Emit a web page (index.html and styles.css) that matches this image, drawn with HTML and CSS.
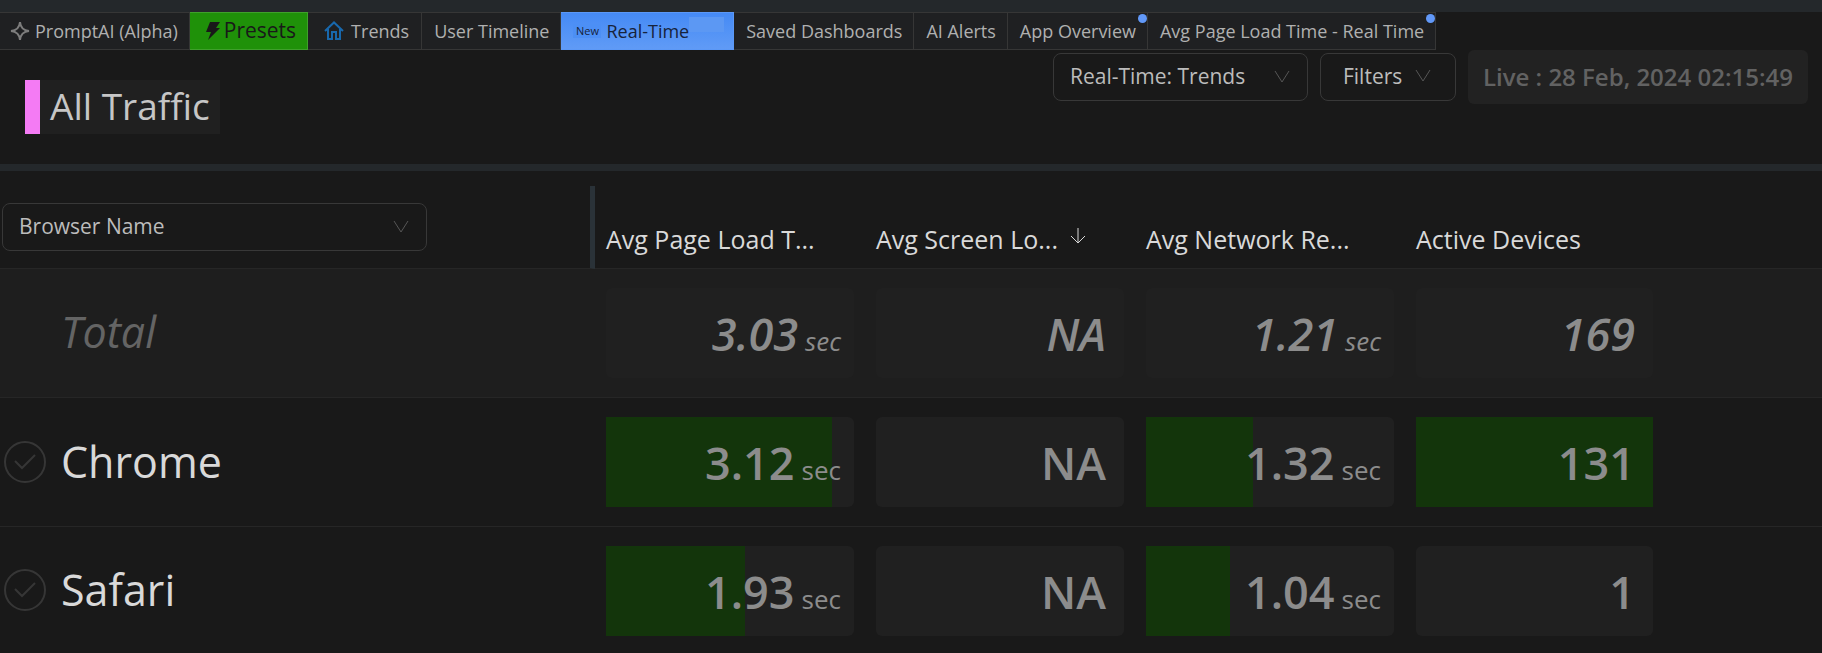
FILE: index.html
```html
<!DOCTYPE html>
<html lang="en">
<head>
    <meta charset="UTF-8">
    <title>Real-Time</title>
    <link rel="stylesheet" href="styles.css">
</head>
<body>
    <nav class="tabs">
        <a class="tab" href="#">
            <svg class="icon-spark" width="20" height="20" viewBox="0 0 20 20"><path d="M10 1 C10.500 6.500 13.500 9.500 19 10 C13.500 10.500 10.500 13.500 10 19 C9.500 13.500 6.500 10.500 1 10 C6.500 9.500 9.500 6.500 10 1 Z"/></svg>
            <span>PromptAI (Alpha)</span>
        </a>
        <a class="tab tab-presets" href="#">
            <svg class="icon-bolt" width="16" height="20" viewBox="0 0 16 20"><path d="M5 2 H15 L11 8 H15 L3 20 L6 12 H1 Z"/></svg>
            <span>Presets</span>
        </a>
        <a class="tab tab-trends" href="#">
            <svg class="icon-home" width="20" height="20" viewBox="0 0 20 20"><path d="M1 10 L10 1.500 L19 10 M4 8 V18 H8 V11 H12 V18 H16 V8"/></svg>
            <span>Trends</span>
        </a>
        <a class="tab" href="#">User Timeline</a>
        <a class="tab tab-active" href="#">
            <span class="new">New</span>
            <span>Real-Time</span>
            <span class="tab-tag"></span>
        </a>
        <a class="tab" href="#">Saved Dashboards</a>
        <a class="tab" href="#">AI Alerts</a>
        <a class="tab" href="#">App Overview<span class="dot"></span></a>
        <a class="tab" href="#">Avg Page Load Time - Real Time<span class="dot"></span></a>
    </nav>

    <header class="header">
        <h1 class="title">All Traffic</h1>
        <div class="tools">
            <div class="select select-view">
                <select aria-label="View">
                    <option>Real-Time: Trends</option>
                </select>
                <svg class="chevron" width="16" height="14" viewBox="0 0 16 14"><path d="M1 1 L8 12 L15 1"/></svg>
            </div>
            <button class="filters" type="button">
                Filters
                <svg class="chevron" width="16" height="14" viewBox="0 0 16 14"><path d="M1 1 L8 12 L15 1"/></svg>
            </button>
            <div class="live">Live : 28 Feb, 2024 02:15:49</div>
        </div>
    </header>

    <main class="panel">
        <table class="metrics">
            <colgroup>
                <col class="col-name">
                <col class="col-metric">
                <col class="col-metric">
                <col class="col-metric">
                <col class="col-devices">
                <col>
            </colgroup>
            <thead>
                <tr>
                    <th class="name-head">
                        <div class="select select-group">
                            <select aria-label="Group by">
                                <option>Browser Name</option>
                            </select>
                            <svg class="chevron" width="16" height="14" viewBox="0 0 16 14"><path d="M1 1 L8 12 L15 1"/></svg>
                        </div>
                    </th>
                    <th>Avg Page Load T...</th>
                    <th>
                        Avg Screen Lo...
                        <svg class="icon-sort" width="16" height="18" viewBox="0 0 16 18"><path d="M8 1 V16 M1 9 L8 16 L15 9"/></svg>
                    </th>
                    <th>Avg Network Re...</th>
                    <th>Active Devices</th>
                    <th></th>
                </tr>
            </thead>
            <tbody>
                <tr class="total">
                    <td><div class="name">Total</div></td>
                    <td><div class="metric"><div class="value">3.03<small>sec</small></div></div></td>
                    <td><div class="metric"><div class="value plain">NA</div></div></td>
                    <td><div class="metric"><div class="value">1.21<small>sec</small></div></div></td>
                    <td><div class="metric"><div class="value plain">169</div></div></td>
                    <td></td>
                </tr>
                <tr>
                    <td>
                        <label class="name">
                            <span class="check">
                                <input type="checkbox">
                                <svg width="22" height="18" viewBox="0 0 22 18"><path d="M1 8 L8 15 L21 2"/></svg>
                            </span>
                            Chrome
                        </label>
                    </td>
                    <td><div class="metric"><div class="bar" style="width: 91%"></div><div class="value">3.12<small>sec</small></div></div></td>
                    <td><div class="metric"><div class="value plain">NA</div></div></td>
                    <td><div class="metric"><div class="bar" style="width: 43%"></div><div class="value">1.32<small>sec</small></div></div></td>
                    <td><div class="metric"><div class="bar" style="width: 100%"></div><div class="value plain">131</div></div></td>
                    <td></td>
                </tr>
                <tr>
                    <td>
                        <label class="name">
                            <span class="check">
                                <input type="checkbox">
                                <svg width="22" height="18" viewBox="0 0 22 18"><path d="M1 8 L8 15 L21 2"/></svg>
                            </span>
                            Safari
                        </label>
                    </td>
                    <td><div class="metric"><div class="bar" style="width: 56%"></div><div class="value">1.93<small>sec</small></div></div></td>
                    <td><div class="metric"><div class="value plain">NA</div></div></td>
                    <td><div class="metric"><div class="bar" style="width: 34%"></div><div class="value">1.04<small>sec</small></div></div></td>
                    <td><div class="metric"><div class="value plain">1</div></div></td>
                    <td></td>
                </tr>
            </tbody>
        </table>
    </main>
</body>
</html>
```
FILE: styles.css
```css
* {
    box-sizing: border-box;
}
body {
    margin: 0;
    background-color: #191919;
    color: #d9d9d9;
    font-family: "Open Sans", "Noto Sans", sans-serif;
    font-size: 22px;
}
svg {
    fill: none;
    flex: none;
}

/* tabs */
.tabs {
    display: flex;
    border-top: 12px solid #24282b;
}
.tab {
    position: relative;
    display: flex;
    align-items: center;
    height: 38px;
    padding: 0 11px 0 12px;
    border: 1px solid #363636;
    border-left: none;
    background-color: #1f2022;
    color: #b0b0b0;
    font-size: 18px;
    white-space: nowrap;
    text-decoration: none;
}
.tab:first-child {
    padding-left: 10px;
    gap: 5px;
}
.tab-presets {
    padding: 0 11px 2px 15px;
    gap: 3px;
    border-color: #3fa02c;
    background-color: #1f9109;
    color: #191919;
    font-size: 21px;
    font-weight: 500;
}
.tab-trends {
    padding: 0 12px 0 16px;
    gap: 7px;
}
.tab-active {
    padding: 0 9px 0 12px;
    border-color: #5b98f7;
    background: linear-gradient(#458af5, #609bf6);
    color: #17233b;
    font-weight: 500;
}
.new {
    width: 28px;
    margin-right: 5px;
    background-color: #4c8ff5;
    font-size: 11px;
    line-height: 14px;
    text-align: center;
}
.tab-tag {
    align-self: flex-start;
    width: 35px;
    height: 15px;
    margin-top: 4px;
    background-color: #5c98f3;
}
.dot {
    position: absolute;
    top: 1px;
    right: 0;
    width: 9px;
    height: 9px;
    border-radius: 50%;
    background-color: #6198f8;
}
.icon-spark {
    stroke: #7d7d7d;
    stroke-width: 2;
}
.icon-bolt {
    fill: #191919;
}
.icon-home {
    stroke: #1868ad;
    stroke-width: 2;
}

/* header */
.header {
    display: flex;
    justify-content: space-between;
    align-items: flex-start;
    height: 121px;
    padding: 0 14px 0 25px;
    border-bottom: 7px solid #24282b;
}
.title {
    margin: 30px 0 0;
    padding: 0 10px 2px;
    border-left: 15px solid #f47bf4;
    background-color: #202020;
    color: #c6c6c6;
    font-size: 37px;
    font-weight: 400;
    line-height: 52px;
}
.tools {
    display: flex;
    align-items: center;
    gap: 12px;
}
.select {
    display: grid;
    align-items: center;
}
.select select,
.select .chevron {
    grid-area: 1 / 1;
}
.select .chevron {
    justify-self: end;
    margin-right: 18px;
    pointer-events: none;
}
.select select,
.filters {
    width: 100%;
    height: 48px;
    padding: 0 44px 2px 16px;
    border: 1px solid #383838;
    border-radius: 8px;
    background-color: #191919;
    color: #bcbcbc;
    font-family: inherit;
    font-size: 21px;
    appearance: none;
}
.select-view {
    width: 255px;
}
.select-group {
    width: 425px;
    margin-left: 2px;
}
.filters {
    display: flex;
    align-items: center;
    justify-content: space-between;
    width: 136px;
    padding: 0 24px 2px 22px;
}
.chevron {
    stroke: #565656;
    stroke-width: 1;
}
.live {
    padding: 0 15px;
    border-radius: 6px;
    background-color: #222222;
    color: #626262;
    font-size: 24px;
    font-weight: 600;
    line-height: 54px;
    white-space: nowrap;
}

/* table */
.panel {
    padding-top: 15px;
}
.metrics {
    width: 100%;
    border-spacing: 0;
    table-layout: fixed;
}
.col-name {
    width: 595px;
}
.col-metric {
    width: 270px;
}
.col-devices {
    width: 259px;
}
.metrics th {
    height: 83px;
    padding: 0 11px 12px;
    border-bottom: 1px solid #262626;
    font-size: 25px;
    font-weight: 500;
    line-height: 34px;
    text-align: left;
    vertical-align: bottom;
    white-space: nowrap;
}
.metrics .name-head {
    padding: 0 0 17px;
    border-right: 5px solid #2a3238;
}
.icon-sort {
    margin-left: 6px;
    stroke: #d9d9d9;
    stroke-width: 1;
    vertical-align: 4px;
}
.metrics td {
    padding: 19px 11px;
    border-bottom: 1px solid #262626;
}
.metrics tr:last-child td {
    padding-bottom: 16px;
    border-bottom: none;
}
.metrics tr td:first-child {
    padding: 0 0 0 4px;
}
.total {
    background-color: #1e1e1e;
}
.total .name {
    padding: 0 0 2px 57px;
    color: #646464;
    font-style: italic;
}
.total .value {
    font-style: italic;
}
.name {
    display: flex;
    align-items: center;
    gap: 15px;
    font-size: 43px;
    line-height: 60px;
}
.check {
    display: grid;
    place-items: center;
}
.check input,
.check svg {
    grid-area: 1 / 1;
}
.check input {
    width: 42px;
    height: 42px;
    margin: 0;
    border: 2px solid #363636;
    border-radius: 50%;
    appearance: none;
}
.check svg {
    stroke: #363636;
    stroke-width: 2;
    pointer-events: none;
}
.metric {
    position: relative;
    height: 90px;
    border-radius: 6px;
    background-color: #202020;
}
.bar {
    position: absolute;
    top: 0;
    left: 0;
    height: 100%;
    background-color: #13350b;
}
.value {
    position: relative;
    padding: 0 13px;
    color: #8c8c8c;
    font-size: 45px;
    font-weight: 600;
    line-height: 92px;
    text-align: right;
    white-space: nowrap;
}
.plain {
    padding-right: 18px;
}
.value small {
    margin-left: 7px;
    font-size: 26px;
    font-weight: 400;
}
```
